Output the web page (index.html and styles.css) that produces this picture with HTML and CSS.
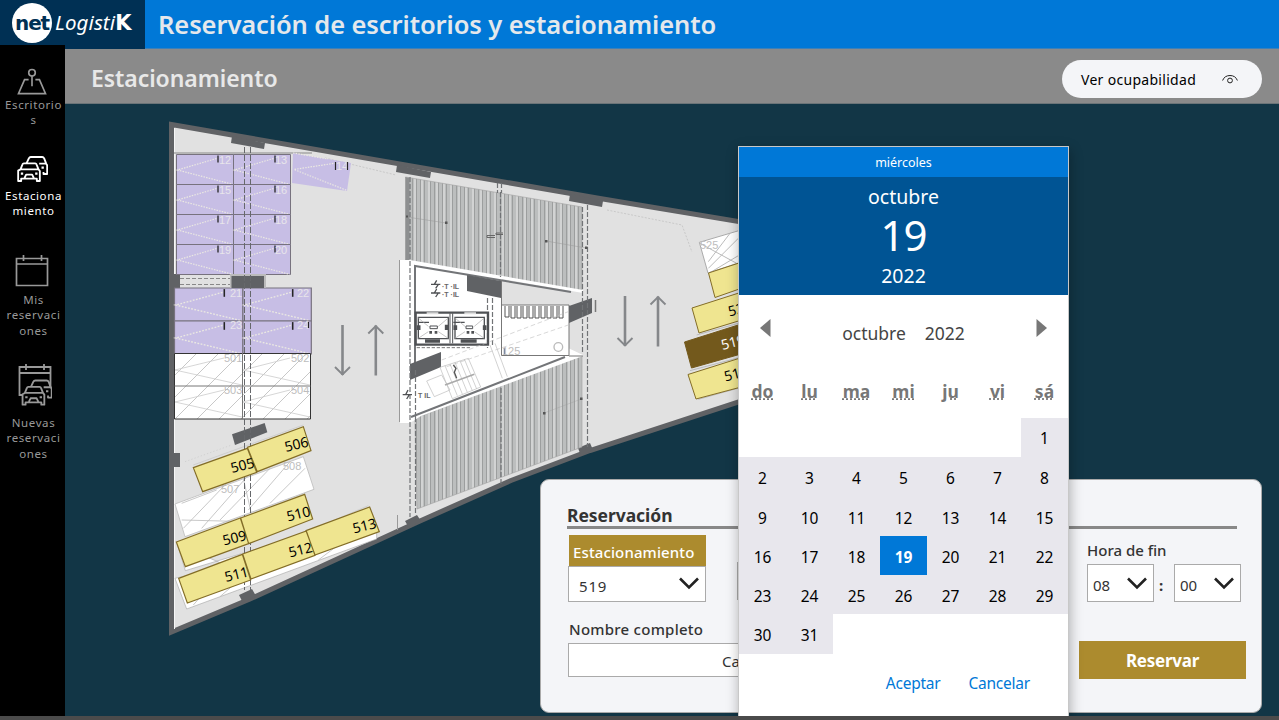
FILE: index.html
```html
<!DOCTYPE html>
<html lang="es">
<head>
<meta charset="utf-8">
<title>Reservación de escritorios y estacionamiento</title>
<link rel="stylesheet" href="styles.css">
</head>
<body>
<div class="app">
<header class="topbar">
  <div class="brand"><span class="brand-disc">net</span><span class="brand-name">Logisti<b>K</b></span></div>
  <h1>Reservación de escritorios y estacionamiento</h1>
</header>
<div class="body">
<nav class="sidebar">
  <a class="item desks">
    <svg width="34" height="30" viewBox="0 0 34 30" fill="none" stroke="#999" stroke-width="1.7"><circle cx="17" cy="5" r="3.400"/><path d="M17 8.500v10.500M13.500 12H9.300L3 26.500h28L24.700 12H20.500"/></svg>
    <span>Escritorio<br>s</span></a>
  <a class="item parking active">
    <svg width="31" height="26" viewBox="50 318 92 78"><use href="#cars"/></svg>
    <span>Estaciona<br>miento</span></a>
  <a class="item mine">
    <svg width="34" height="34" viewBox="0 0 34 34" fill="none" stroke="#999" stroke-width="1.7"><path d="M1.500 4.500h31v27h-31zM1.500 10h31M8.500 1v6M26.500 1v6"/></svg>
    <span>Mis<br>reservaci<br>ones</span></a>
  <a class="item new">
    <svg width="34" height="44" viewBox="0 0 34 44" fill="none" stroke="#999" stroke-width="1.8"><path d="M4 32H1.500V4h31v21M1.500 10h31M8 1v6M26 1v6"/><g color="#999" transform="translate(-13.200 -90) scale(.335)"><use href="#cars"/></g></svg>
    <span>Nuevas<br>reservaci<br>ones</span></a>
</nav>
<main class="main">
  <div class="subbar"><h2>Estacionamiento</h2>
    <button class="pill"><span>Ver ocupabilidad</span><svg width="16" height="12" viewBox="0 0 16 12" fill="none" stroke="#222" stroke-width="1"><path d="M.6 7.500C1.800 4.200 4.500 2.500 8 2.500s6.200 1.700 7.400 5"/><circle cx="8" cy="7.500" r="2.400"/></svg></button>
  </div>
  <div class="stage">
  <svg class="plan" width="1214" height="612" viewBox="65 104 1214 612">
    <defs>
      <g id="cars" fill="none" stroke="currentColor" stroke-width="5.500" stroke-linejoin="round">
        <path d="M78 340l7-15q2-4 6-4h34q4 0 6 4l6 16 3 5v26h-11v-6M116 341h21"/>
        <path fill="#000" d="M60 358l6-15q1-3 4-3h34q3 0 4 3l6 15 4 5v30h-9v-7H62v7h-9v-31zM60 358h53M72 384l5-10h18l5 10"/>
        <path d="M61 371h7M104 371h7M123 353h7" stroke-width="6.500"/>
      </g>
      <pattern id="hatch" width="22" height="22" patternUnits="userSpaceOnUse"><path d="M-2 24L24-2" stroke="#c2c2c2" stroke-width=".9"/></pattern>
      <pattern id="deck" width="22" height="8" patternUnits="userSpaceOnUse" x="406">
        <path fill="#bcbebe" d="M0 0h22v8H0z"/>
        <path d="M1 0v8M9 0v8M16 0v8" stroke="#dedede" stroke-width="1.300"/>
        <path d="M2.500 0v8M6.500 0v8M10.500 0v8M14.500 0v8M18.500 0v8" stroke="#9c9e9e" stroke-width="1"/>
      </pattern>
      <g id="bay"><path fill="#c7bee5" stroke="#77727e" stroke-width="1" d="M0 0h57v30H0z"/><path d="M40 4L1 15.500l55 14.300" fill="none" stroke="#ebe9e2" stroke-width="1.200" stroke-dasharray="1.500 1.200"/><path d="M41.500 1v7" stroke="#252525" stroke-width="1.300"/></g>
      <g id="arrow"><path d="M0 0v50" stroke="#85878a" stroke-width="2.600"/><path d="M-7.500 42L0 49.500 7.500 42" fill="none" stroke="#85878a" stroke-width="1.900"/></g>
    </defs>
    <!-- building shell -->
    <path d="M171.500 124.500L600 198.500 760 225v170L590 450.500l-79 30-91 40.500-170 78-78.500 33z" fill="#e1e1e1" stroke="#606265" stroke-width="5"/>
    <path d="M174.500 128v501" stroke="#f6f6f6" stroke-width="1"/>
    <path fill="#606265" d="M232 136l33 7-1 6-33-6zM397 165l34 7-1 6-34-6zM570 194l33 7-1 6-33-6zM174 274h6v14h-6zM174 453h6v14h-6zM239 595l13-6 4 7-13 7zM405 521l12-6 4 6-12 7zM578 448l12-5 3 7-12 6z"/>
    <path d="M174 153h138" fill="none" stroke="#a6a6a6" stroke-width="1.500"/><path d="M325 158l71 17M607 210l75 15 10 27" fill="none" stroke="#c9c9c9" stroke-width="1" stroke-dasharray="2 1.500"/>
    <!-- violet bays -->
    <use href="#bay" x="176.500" y="154.500"/><use href="#bay" x="233.500" y="154.500"/>
    <use href="#bay" x="176.500" y="184.500"/><use href="#bay" x="233.500" y="184.500"/>
    <use href="#bay" x="176.500" y="214.500"/><use href="#bay" x="233.500" y="214.500"/>
    <use href="#bay" x="176.500" y="244.500"/><use href="#bay" x="233.500" y="244.500"/>
    <path d="M293 153l58 10-4 28-55-8z" fill="#c7bee5"/><path d="M336 163l-42 6.500 53 21M293 153l35 6" fill="none" stroke="#ebe9e2" stroke-width="1.200" stroke-dasharray="1.500 1.200"/>
    <g transform="translate(174.500 288) scale(1.200 1.100)"><use href="#bay"/><use href="#bay" x="57"/><use href="#bay" y="30"/><use href="#bay" x="57" y="30"/></g>
    <g class="faint pale"><text x="219" y="164">12</text><text x="275" y="164">13</text><text x="219" y="194">15</text><text x="275" y="194">16</text><text x="219" y="224">17</text><text x="275" y="224">18</text><text x="219" y="254">19</text><text x="275" y="254">20</text><text x="336" y="170">14</text><text x="230" y="297">21</text><text x="297" y="297">22</text><text x="230" y="329">23</text><text x="297" y="329">24</text></g>
    <path d="M335.500 162v8M347.500 162v8M308.500 322v6" stroke="#252525" stroke-width="1.200"/>
    <path d="M180 278.500h50M180 284.500h50" stroke="#888" stroke-width="1" stroke-dasharray="4 2"/><path d="M230 274h36v14h-36z" fill="#bbb"/><path d="M231.500 276h32.500v12h-32.500z" fill="#606265"/>
    <!-- hatched bays -->
    <path d="M174.500 353.500h136v65.500h-136z" fill="#fff"/><path d="M174.500 353.500h136v65.500h-136z" fill="url(#hatch)" stroke="#333"/>
    <path d="M174.500 386h136M242.500 353v66" stroke="#777" fill="none"/><path d="M224 358l-49 12 67 15M290 358l-47 12 67 15M224 390l-49 12 67 15M290 390l-47 12 67 15" fill="none" stroke="#ccc" stroke-width=".8"/>
    <g class="faint"><text x="224" y="362">501</text><text x="291" y="362">502</text><text x="224" y="394">503</text><text x="291" y="394">504</text></g>
    <!-- lower-left stalls -->
    <g transform="translate(160 420) scale(.33333)">
      <path d="M45 252l385-142 32 98-387 142z" fill="#fff"/>
      <path d="M52 372l24 80 390-118v40L276 470zM45 475l35 92 570-210v-20z" fill="#fff" stroke="#aaa" stroke-width="2"/>
      <path d="M45 252l385-142 32 98-387 142zM250 175l25 110M65 300l200 5M70 325L200 190M125 325L270 160M180 300L330 145M265 270L390 125M330 250l105-105M65 250L170 210M100 555l70-80M180 530l75-65M475 420l80-60" fill="none" stroke="#bdbdbd" stroke-width="2.500"/>
      <path d="M216 43l98-34 8 28-97 38z" fill="#606265"/>
      <path d="M100 135L430 15M385 360l240-103" stroke="#c4c4c4" stroke-width="2" fill="none"/><path d="M75 125l140-50" stroke="#c8c8c8" stroke-width="2" stroke-dasharray="4 6"/>
    </g>
    <g class="faint"><text x="221" y="493">507</text><text x="283" y="470">508</text></g>
    <path d="M244.500 147v443M250.500 147v443" stroke="#66686b" stroke-width="1" stroke-dasharray="6 2"/>
    <g transform="translate(160 420) scale(.33333)" class="stall">
      <path d="M100 143l162-58 28 72-162 58zM262 82l168-62 23 72-161 63zM49 366l192-72 25 77-190 69zM242 294l192-71 24 74-192 74zM56 475l191-72 25 77-190 69zM248 402l191-69 26 73-192 71zM438 332l191-71 29 74-193 70z"/>
    </g>
    <g class="number">
      <text transform="translate(232 473) rotate(-14)">505</text><text transform="translate(286 452) rotate(-14)">506</text><text transform="translate(224 545.500) rotate(-14)">509</text><text transform="translate(288 521.500) rotate(-14)">510</text><text transform="translate(226 582) rotate(-14)">511</text><text transform="translate(290 557.500) rotate(-14)">512</text><text transform="translate(354 533.500) rotate(-14)">513</text>
    </g>
    <use href="#arrow" x="342.500" y="325"/><use href="#arrow" transform="translate(375.800 375.500) scale(1 -1)"/><use href="#arrow" x="625" y="296"/><use href="#arrow" transform="translate(658 346.500) scale(1 -1)"/>
    <!-- central core -->
    <path d="M405.500 177L582 207v84L405.500 260zM415 418l167-63v92l-165 62z" fill="url(#deck)" stroke="#a0a0a0" stroke-width=".6"/>
    <path d="M405.500 177v84h4v-83z" fill="#8d8f90"/>
    <path d="M400 260h10l173 30v66l-162 60-11 7h-10z" fill="#fff"/><path d="M502 279l81 14v62l-81-38z" fill="#e1e1e1"/>
    <path d="M399.500 260v162" stroke="#999"/><path d="M397.500 515v15" stroke="#999"/>
    <path d="M411 417l154-60M415 365V266l156 26" fill="none" stroke="#737578" stroke-width="2"/>
    <path d="M501.500 305h67.500v50.500h-67.500z" fill="#fff" stroke="#777"/>
    <path d="M569 356h14M501.500 280v25" stroke="#777"/>
    <path d="M505 306v11h4v-11m2 0v12h4v-12m2 0v12h4v-12m2 0v12h4v-12m2 0v12h4v-12m2 0v12h4v-12m2 0v12h4v-12m2 0v12h4v-12m2 0v12h4v-12m2 0v12h4v-12" fill="none" stroke="#555"/>
    <path fill="#606265" d="M467 275l34 6v17l-34-7zM410 364l31-12v15l-31 13zM569 306l23-8v15l-23 10z"/>
    <path d="M595.500 300v12M504.500 348v7" stroke="#777" stroke-width="1.500"/>
    <path d="M410 177v340M415.500 370v48M415.500 417v98M500.500 192v85M501 388v98M582.500 207v145M587.500 205v242M487.500 298v50M492.500 298v48M497.500 183v10M501.500 183v10" fill="none" stroke="#717376" stroke-width="1.200" stroke-dasharray="5 2"/>
    <!-- lift pair -->
    <g transform="translate(390 250) scale(.33333)" fill="none" stroke="#4f5154">
      <path d="M77 188h217v96H77z" stroke-width="7"/><path d="M85 202h90v64H85zM195 202h88v64h-88z" stroke-width="4"/><path d="M180 190v90M188 190v90" stroke-width="3"/>
      <path d="M87 217h30M190 217h34" stroke-width="4"/><path d="M105 273h45M212 273h48M86 226v14M170 224v16M196 226v14M284 226v14" stroke-width="11"/><path d="M110 190h35M223 190h35" stroke="#ddd" stroke-width="6"/>
      <path d="M85 204l30 25M175 204l-30 25M195 204l30 25M283 204l-30 25M85 265l30-20M175 265l-30-20M195 265l30-20M283 265l-30-20" stroke="#aaa" stroke-width="2"/><path d="M120 228h22v8h-22zM228 228h20v8h-20z" stroke-width="3"/>
      <path d="M118 247h8M134 247h8M230 247h8M244 247h8" stroke-width="8"/>
      <path d="M80 293h165" stroke="#777" stroke-width="3" stroke-dasharray="10 5"/>
      <path d="M123 103h28M140 91l-7 12h12l-8 12M123 129h28M140 117l-7 12h12l-8 12M38 434h28M54 420l-7 14h11l-8 13" stroke-width="4"/>
      <path d="M155 330L535 185M170 350l365-125" stroke="#c4c4c4" stroke-width="2" stroke-dasharray="14 8"/>
      <path d="M150 352l85-27 37 86-85 35zM165 347l37 90M180 342l37 90M195 337l37 90M210 332l37 90M223 327l37 90M110 393l45-18 25 45-47 20zM300 285l37 100M315 280l37 100" stroke="#bbb" stroke-width="2"/>
      <path d="M165 405l88-32" stroke="#aaa" stroke-width="5"/><path d="M190 345l8 10-5 12 7 18" stroke="#555" stroke-width="4"/>
      <circle cx="505" cy="291" r="13" stroke="#bbb" stroke-width="4"/><path d="M460 490l114-43" stroke="#999" stroke-width="1"/>
    </g>
    <g class="marks"><text x="442" y="288.500">·T ·IL</text><text x="442" y="297">·T ·IL</text><text x="418" y="397.500">T IL</text></g>
    <text class="faint" x="502" y="355">125</text>
    <path d="M407 217l39 6M546 241l40 7" stroke="#999" stroke-width=".5"/><path fill="#555" d="M406 215.500h2v2h-2zM445 221.500h2.500v2.500h-2.500zM545 240h2.500v2.500h-2.500zM585 246.500h2.500v2.500h-2.500zM543 412h2.500v2.500h-2.500zM580 397.500h2.500v2.500h-2.500z"/><path d="M503 234.500h-7v-1.500h7M495 235.500h-8v2h8" stroke="#666" fill="none"/>
    <!-- right-hand stalls -->
    <g transform="translate(580 180) scale(.33333)"><path d="M358 187l142-42v96l-116 38z" fill="#fff" stroke="#aaa" stroke-width="3"/><path d="M385 265l95-95M390 278l100-60M360 190l110 60M385 245L450 160M350 465l150-42M330 572l170-45M355 658l150-42" stroke="#bbb" stroke-width="3"/></g>
    <text class="faint" x="700" y="249">525</text>
    <g class="stall"><path d="M708.500 273l36.500-12v26l-30 10.500zM692 308l53-17v28l-46 14zM688 374.500l57-18v29.500l-49 13z"/><path class="picked" d="M684.500 342l60-19v30l-53 15z"/></g>
    <g class="number"><text transform="translate(729.500 316.500) rotate(-14)">521</text><text class="white" transform="translate(722.500 350) rotate(-14)">519</text><text transform="translate(725.500 381.500) rotate(-14)">518</text></g>
  </svg>
  <section class="form">
    <h3>Reservación</h3>
    <div class="fields">
      <div class="slot"><label><span>Estacionamiento</span></label><div class="select wide"><span>519</span><svg width="20" height="13" viewBox="0 0 20 13"><path d="M1 1.500l9 9 9-9"/></svg></div></div>
      <div class="date"></div>
      <div class="end"><label>Hora de fin</label><div class="time"><div class="select"><span>08</span><svg width="20" height="13" viewBox="0 0 20 13"><path d="M1 1.500l9 9 9-9"/></svg></div><b>:</b><div class="select"><span>00</span><svg width="20" height="13" viewBox="0 0 20 13"><path d="M1 1.500l9 9 9-9"/></svg></div></div></div>
    </div>
    <div class="bottom"><div class="name"><label>Nombre completo</label><div class="input">Ca</div></div><button class="reserve">Reservar</button></div>
  </section>
  <section class="picker">
    <div class="weekday">miércoles</div>
    <div class="chosen"><div class="mo">octubre</div><div class="day">19</div><div class="yr">2022</div></div>
    <div class="month"><svg width="11" height="18" viewBox="0 0 11 18"><path d="M10.500 0v18L0 9z" fill="#777"/></svg><div><span>octubre</span><span>2022</span></div><svg width="11" height="18" viewBox="0 0 11 18"><path d="M.5 0v18L11 9z" fill="#777"/></svg></div>
    <div class="names"><abbr title="domingo">do</abbr><abbr title="lunes">lu</abbr><abbr title="martes">ma</abbr><abbr title="miércoles">mi</abbr><abbr title="jueves">ju</abbr><abbr title="viernes">vi</abbr><abbr title="sábado">sá</abbr></div>
    <div class="days">
      <i class="first">1</i><i>2</i><i>3</i><i>4</i><i>5</i><i>6</i><i>7</i><i>8</i><i>9</i><i>10</i><i>11</i><i>12</i><i>13</i><i>14</i><i>15</i><i>16</i><i>17</i><i>18</i><i class="sel">19</i><i>20</i><i>21</i><i>22</i><i>23</i><i>24</i><i>25</i><i>26</i><i>27</i><i>28</i><i>29</i><i>30</i><i>31</i>
    </div>
    <div class="actions"><a>Aceptar</a><a>Cancelar</a></div>
  </section>
  </div>
</main>
</div>
<div class="footer"></div>
</div>
</body>
</html>
```
FILE: styles.css
```css
* { box-sizing: border-box; }
body { margin: 0; overflow: hidden; font-family: "Noto Sans", "Open Sans", sans-serif; color: #000; }
h1, h2, h3 { margin: 0; font-weight: 600; }
button { border: 0; font-family: inherit; }
.app { width: 1279px; height: 720px; display: flex; flex-direction: column; background: #123646; }
.topbar { height: 49px; display: flex; background: #0078d7; border-bottom: 1px solid #3d80b8; }
.brand { width: 145px; height: 49px; background: #003054; display: flex; align-items: center; padding: 0 0 3px 12px; color: #fff; }
.brand-disc { width: 40px; height: 40px; border-radius: 50%; background: #fff; color: #003054; font: bold 20px/40px "DejaVu Sans", "Noto Sans", sans-serif; letter-spacing: -1.200px; text-align: center; }
.brand-name { display: flex; align-items: baseline; margin: -3px 0 0 3px; font: italic 20.5px "Noto Sans", sans-serif; letter-spacing: .1px; white-space: nowrap; }
.brand-name b { font: bold 21px "DejaVu Sans", sans-serif; }
h1 { font-size: 25.500px; line-height: 49px; padding-left: 13px; letter-spacing: -.09px; color: #e4e8ec; white-space: nowrap; }
.body { flex: 1; display: flex; min-height: 0; }
.sidebar { width: 65px; margin-top: -4px; position: relative; background: #000; display: flex; flex-direction: column; }
.item { display: flex; flex-direction: column; align-items: center; color: #999; font-size: 11.500px; line-height: 15.300px; letter-spacing: .6px; text-align: center; }
.item span { width: 65px; padding-left: 2px; white-space: nowrap; }
.item.active { color: #fff; }
.desks { padding-top: 23px; }
.desks svg { height: 29px; margin-right: 2px; }
.parking { padding-top: 28px; }
.parking svg { margin-right: 1px; }
.parking span { margin-top: 6px; }
.mine { padding-top: 36px; }
.mine svg { margin-right: 1px; }
.mine span { margin-top: 4px; }
.new { padding-top: 25px; }
.new svg { margin-left: 5px; }
.new span { margin-top: 8px; }
.main { flex: 1; min-width: 0; display: flex; flex-direction: column; }
.subbar { height: 55px; background: #8a8a8a; border-bottom: 1px solid #6b7478; display: flex; align-items: center; justify-content: space-between; padding: 5px 17px 0 26px; }
h2 { font-size: 23px; line-height: 30px; margin-top: -2px; letter-spacing: -.07px; color: #e8e8e8; }
.pill { width: 200px; height: 38px; border-radius: 19px; background: #f4f5f8; display: flex; align-items: center; justify-content: space-between; padding: 1px 24px 0 19px; font-size: 14px; letter-spacing: .3px; color: #000; }
.stage { flex: 1; min-height: 0; position: relative; overflow: hidden; }
.plan { display: block; }
.faint { fill: #bdbdbd; font: 11px "Liberation Sans", sans-serif; }
.pale text { fill: #e8e5ea; font-size: 11px; }
.marks { fill: #666; font: bold 7px "Liberation Sans", sans-serif; }
.number { font: 14px "Noto Sans", sans-serif; }
.number .white { fill: #fff; }
.stall path { fill: #efe590; stroke: #836d27; stroke-width: 1px; }
.stall[transform] path { stroke-width: 3.500px; }
.stall .picked { fill: #73591c; stroke: #73591c; }
.form { position: absolute; left: 475px; top: 375px; width: 722px; height: 234px; border: 1px solid #aaa; border-radius: 9px; background: #f4f5f8; padding: 24px 15px 0 26px; color: #333; font-size: 15px; }
h3 { width: 670px; height: 25px; border-bottom: 3px solid #888; font-size: 17.500px; line-height: 22px; font-weight: 700; letter-spacing: -.05px; }
.fields { display: flex; margin-top: 6px; padding-left: 1px; }
.slot label { display: block; margin-left: 1px; height: 31px; width: 137px; padding-left: 4px; background: #ac8b2e; color: #fff; line-height: 34px; font-weight: 500; letter-spacing: .12px; }
.select { width: 67px; height: 38px; border: 1px solid #aaa; background: #fff; display: flex; align-items: center; justify-content: space-between; padding: 3px 6px 0 5px; }
.select.wide { width: 138px; height: 36px; padding-left: 10px; letter-spacing: .8px; }
.select svg { fill: none; stroke: #222; stroke-width: 2.600; margin-top: -5px; }
.time .select svg { margin-top: -3px; }
.date { width: 320px; height: 38px; border: 1px solid #aaa; background: #fff; margin: 27px 0 0 31px; }
.end { margin-left: 30px; }
.end label { display: block; height: 29px; line-height: 31px; font-weight: 500; }
.time { display: flex; align-items: center; gap: 4px; }
.time b { width: 12px; padding-right: 6px; padding-top: 3px; text-align: center; }
.bottom { display: flex; justify-content: space-between; align-items: flex-end; margin-top: 13px; padding-left: 1px; }
.name label { display: block; padding-left: 1px; line-height: 28px; font-weight: 500; letter-spacing: .25px; }
.input { width: 480px; height: 34px; border: 1px solid #aaa; background: #fff; padding-left: 153px; line-height: 34px; }
.reserve { width: 167px; height: 38px; background: #ac8b2e; color: #fff; font-size: 17px; font-weight: 700; letter-spacing: -.25px; margin-bottom: -2px; }
.picker { position: absolute; left: 673px; top: 42px; width: 331px; height: 600px; background: #fff; border: 1px solid #c8c8c8; box-shadow: 1px 4px 12px rgba(0, 0, 0, .3); }
.weekday { height: 30px; background: #0078d7; color: #fff; font-size: 12.500px; line-height: 31px; text-align: center; }
.chosen { height: 118px; background: #005494; color: #fff; text-align: center; font-size: 19.500px; }
.mo { height: 38px; line-height: 39px; }
.day { height: 40px; font-size: 42px; line-height: 40px; letter-spacing: -1px; }
.yr { height: 40px; line-height: 42px; }
.month { display: flex; justify-content: space-between; align-items: center; height: 76px; padding: 0 21px; font-size: 17.500px; color: #444; }
.month svg { margin-top: -10px; }
.month div { display: flex; gap: 19px; }
.names { display: grid; grid-template-columns: repeat(7, 1fr); height: 47px; line-height: 40px; text-align: center; font-size: 17.500px; font-weight: 700; color: #777; }
.days { display: grid; grid-template-columns: repeat(7, 1fr); grid-auto-rows: 39.300px; text-align: center; font-size: 15.500px; line-height: 42px; }
.days i { font-style: normal; background: #e8e7ed; }
.days .first { grid-column: 7; line-height: 41px; }
.days .sel { background: #0078d7; color: #fff; font-weight: 700; }
.actions { display: flex; justify-content: flex-end; gap: 28px; padding: 18px 38px 0 0; font-size: 15.500px; color: #0078d7; letter-spacing: -.23px; }
.footer { height: 4px; background: #4b4b4b; position: relative; }
```
